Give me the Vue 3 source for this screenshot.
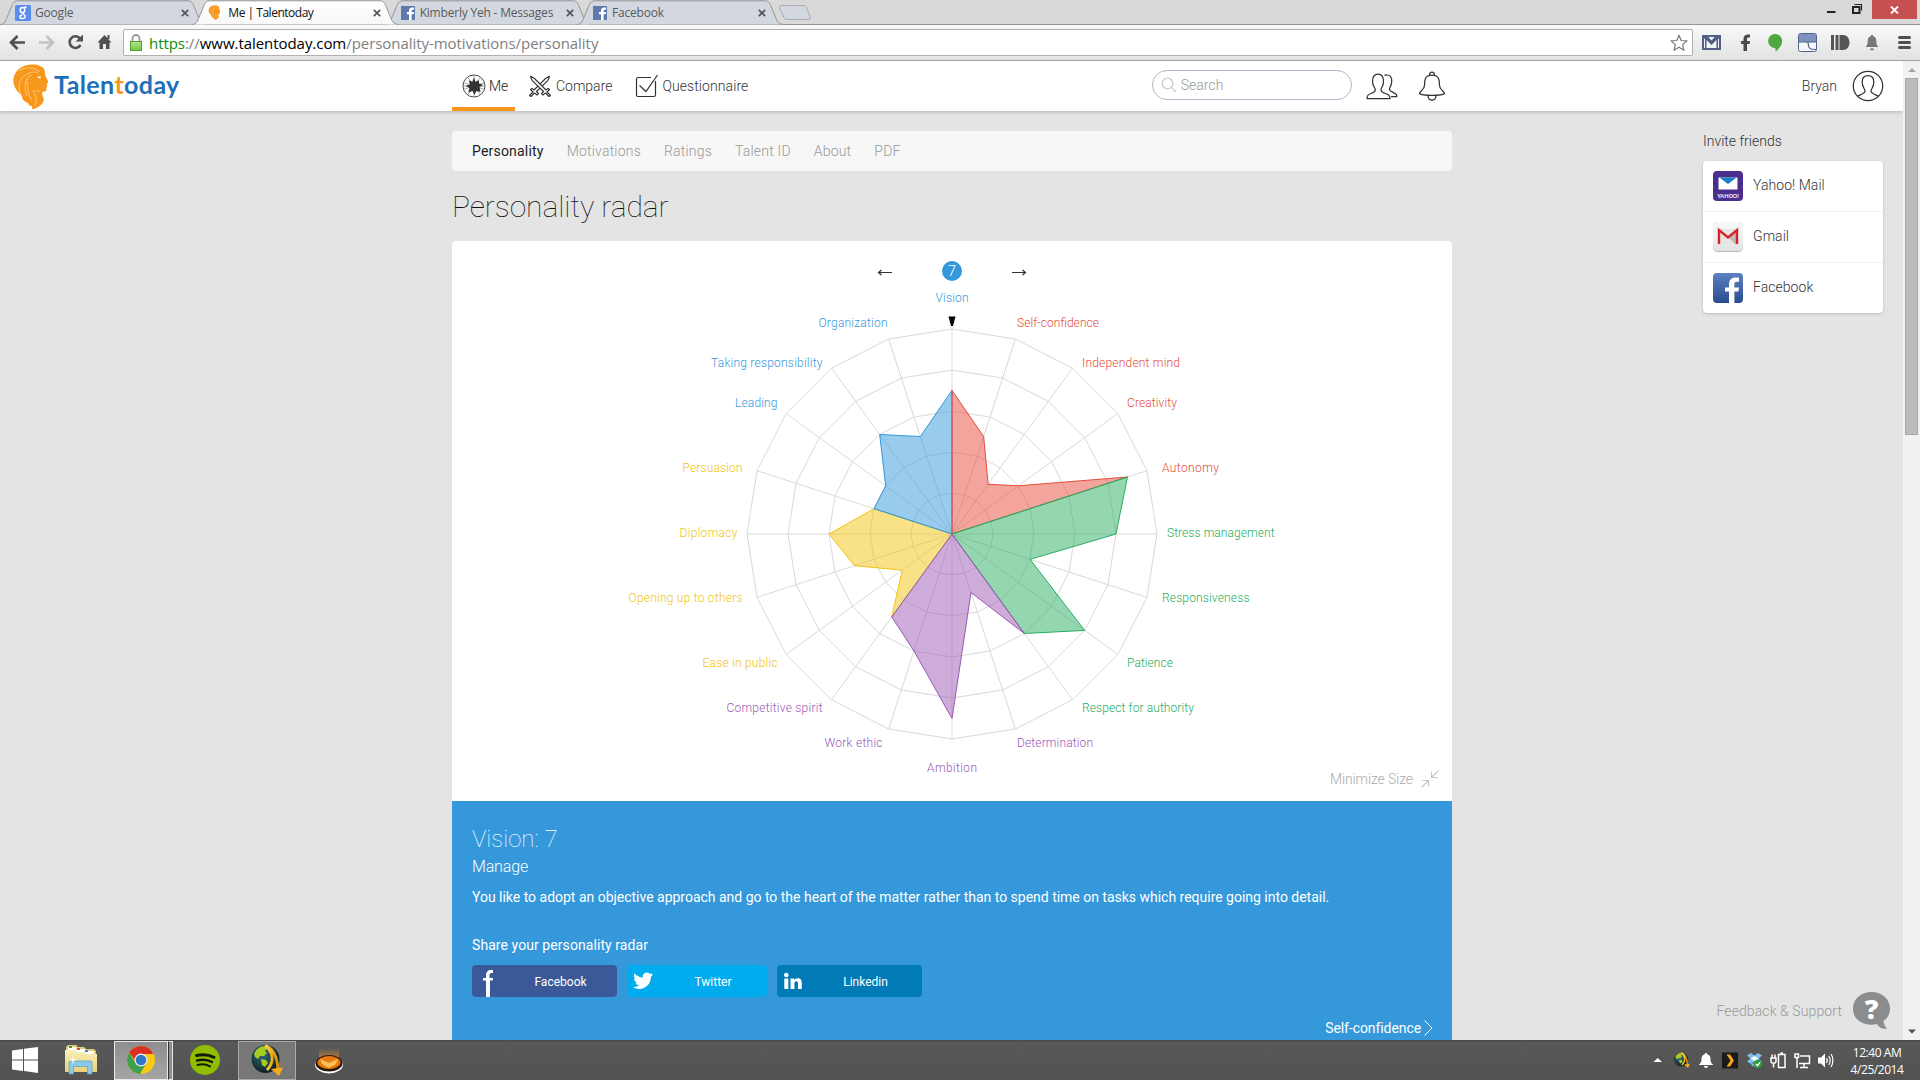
<script setup>
const tabs = [
  { title: 'Google', icon: 'google' },
  { title: 'Me | Talentoday', icon: 'lion', active: true },
  { title: 'Kimberly Yeh - Messages', icon: 'fb' },
  { title: 'Facebook', icon: 'fb' },
]

const sections = ['Personality', 'Motivations', 'Ratings', 'Talent ID', 'About', 'PDF']

const BLUE = '#3498db'
const RED = '#e74c3c'
const GREEN = '#27ae60'
const PURPLE = '#9b59b6'
const YELLOW = '#f1c40f'

// One entry per axis, clockwise from the top; x / y locate the label around the centre, w is its width.
const traits = [
  { name: 'Vision', value: 7, color: BLUE, x: 0, y: -232, w: 33 },
  { name: 'Self-confidence', value: 5, color: RED, x: 65, y: -207, w: 82 },
  { name: 'Independent mind', value: 3, color: RED, x: 130, y: -167, w: 98 },
  { name: 'Creativity', value: 4, color: RED, x: 175, y: -127, w: 50 },
  { name: 'Autonomy', value: 9, color: RED, x: 210, y: -62, w: 57 },
  { name: 'Stress management', value: 8, color: GREEN, x: 215, y: 3, w: 107.5 },
  { name: 'Responsiveness', value: 4, color: GREEN, x: 210, y: 68, w: 87.5 },
  { name: 'Patience', value: 8, color: GREEN, x: 175, y: 133, w: 46 },
  { name: 'Respect for authority', value: 6, color: GREEN, x: 130, y: 178, w: 112 },
  { name: 'Determination', value: 3, color: PURPLE, x: 65, y: 213, w: 76 },
  { name: 'Ambition', value: 9, color: PURPLE, x: 0, y: 238, w: 50 },
  { name: 'Work ethic', value: 6, color: PURPLE, x: -69.5, y: 213, w: 58 },
  { name: 'Competitive spirit', value: 5, color: PURPLE, x: -129.5, y: 178, w: 96 },
  { name: 'Ease in public', value: 3, color: YELLOW, x: -174.5, y: 133, w: 75 },
  { name: 'Opening up to others', value: 5, color: YELLOW, x: -209.5, y: 68, w: 114 },
  { name: 'Diplomacy', value: 6, color: YELLOW, x: -214.5, y: 3, w: 58 },
  { name: 'Persuasion', value: 4, color: YELLOW, x: -209.5, y: -62, w: 60 },
  { name: 'Leading', value: 4, color: BLUE, x: -174.5, y: -127, w: 42.5 },
  { name: 'Taking responsibility', value: 6, color: BLUE, x: -129.5, y: -167, w: 111.5 },
  { name: 'Organization', value: 5, color: BLUE, x: -64.5, y: -207, w: 69 },
]

const RADIUS = 205
const point = (i, value) => {
  const a = (i * Math.PI) / 10
  const r = (value / 10) * RADIUS
  return [+(Math.sin(a) * r).toFixed(2), +(-Math.cos(a) * r).toFixed(2)]
}
const rings = [2, 4, 6, 8, 10].map((v) => traits.map((_, i) => point(i, v).join(',')).join(' '))
const axes = traits.map((_, i) => point(i, 10))
const groups = [
  { from: 12, color: YELLOW },
  { from: 16, color: BLUE },
  { from: 0, color: RED },
  { from: 4, color: GREEN },
  { from: 8, color: PURPLE },
].map((g) => {
  const pts = ['0,0']
  for (let i = g.from; i <= g.from + 4; i++) pts.push(point(i, traits[i % 20].value).join(','))
  return { color: g.color, points: pts.join(' ') }
})
const anchor = (x) => (x === 0 ? 'middle' : x > 0 ? 'start' : 'end')
</script>

<template>
  <div class="screen">
    <svg width="0" height="0" class="defs">
      <defs>
        <linearGradient id="tabOn" x1="0" y1="0" x2="0" y2="1"><stop offset="0" stop-color="#fff" /><stop offset="1" stop-color="#f8f8f8" /></linearGradient>
        <linearGradient id="fbg" x1="0" y1="0" x2="0" y2="1"><stop offset="0" stop-color="#5c80c4" /><stop offset="1" stop-color="#2a4c8c" /></linearGradient>
        <linearGradient id="gmg" x1="0" y1="0" x2="0" y2="1"><stop offset="0" stop-color="#f8f8f8" /><stop offset="1" stop-color="#e2e4e3" /></linearGradient>
        <linearGradient id="lockg" x1="0" y1="0" x2="0" y2="1"><stop offset="0" stop-color="#b4e68a" /><stop offset="1" stop-color="#6fc63f" /></linearGradient>
        <radialGradient id="globe" cx=".4" cy=".35" r=".7"><stop offset="0" stop-color="#2f6b78" /><stop offset="1" stop-color="#0a1c22" /></radialGradient>
        <linearGradient id="gold" x1="0" y1="0" x2="1" y2="0"><stop offset="0" stop-color="#ffd23a" /><stop offset="1" stop-color="#e09000" /></linearGradient>
        <linearGradient id="folder" x1="0" y1="0" x2="0" y2="1"><stop offset="0" stop-color="#fbf0b8" /><stop offset="1" stop-color="#e9cf78" /></linearGradient>
        <linearGradient id="glow" x1="0" y1="0" x2="0" y2="1"><stop offset="0" stop-color="#ff9d2e" stop-opacity="0" /><stop offset="1" stop-color="#ff9d2e" stop-opacity=".75" /></linearGradient>
        <symbol id="lion" viewBox="0 0 36 45">
          <path fill="#f7981c" d="M19 .5C24 0 29 2 31 5c1 2 1 4 1 6l1.500 3c.5 1.500 2 3 1.800 4.500-.3 1-1.300.8-1.500 1.500l.4 2.500-1 1 .3 2.500c-1 2.500-4 .8-4.500 3 0 3 2.500 4.500 1.500 8-1 3.500-6 7.500-12 8.500 1-1.500 1-2.500.4-3.500-2 .4-3.400-1-3.900-3C10 37.500 9 34 8.500 31 5 28.500 1 24 .4 18 0 12 3 6.500 8 3.500 11 1.500 15 .5 19 .5z" />
          <path fill="none" stroke="#ffd79c" stroke-width=".7" d="M8 31C5 24 5 14 14 10c5-2.500 9-3 11.500 0M12 20c1-4 3-8 7-9M14 32C11 25 12 18 15 15M19 36c-4-5-5-12-4-18M27 27c-3 1-4-2-7 0 3 4 4 9 2 15M6 7C10 4 17 3 22 5l5 3" />
          <path fill="#fff" d="M24.500 12.500l3.500.3-.5 1.500-2.500-.4z" />
        </symbol>
        <symbol id="earth" viewBox="0 0 32 32">
          <circle cx="14.500" cy="15" r="14" fill="url(#globe)" />
          <path fill="#a6cc22" d="M3 10C5 5 9 2 14 2l3 2-3 3 2 2-3 3H9l-2 3-3-2zM10 15l5 1 2 3-3 4-3-2zM18 3l4 2-1 4-3-2z" />
          <path fill="none" stroke="url(#gold)" stroke-width="2.800" d="M14 1.500c7 2 12 9 13 24M15 2c5 5 7 10 6 15s-3 7-5 9" />
          <path fill="#f3ab17" d="M20 25l12-1.500-4 8.500z" />
        </symbol>
      </defs>
    </svg>

    <!-- Browser window -->
    <header class="strip">
      <div class="tabs">
        <div v-for="(t, i) in tabs" :key="i" class="tab" :class="{ on: t.active }">
          <svg class="shape" width="208" height="25" viewBox="0 0 208 25">
            <path :fill="t.active ? 'url(#tabOn)' : '#d3d8e0'" stroke="#949597" d="M0 24.500C4 24 5 22.500 6.500 18.500L12 5.500C13.600 1.800 14.500.8 18.500.8H187c4 0 5 1 6.600 4.700l5.500 13C200.600 22.500 202 24 207 24.500" />
          </svg>
          <svg v-if="t.icon === 'google'" class="fav" viewBox="0 0 16 16"><rect width="16" height="16" rx="1.500" fill="#5b8def" /><g fill="none" stroke="#fff" stroke-width="1.500"><ellipse cx="7.500" cy="5" rx="2.300" ry="2.600" /><path d="M9 2.300h2.500M8 7.600c-1 1 0 1.500 1 2 2 1.200 1.500 4-1.500 4s-3.500-3-.5-3.600" /></g></svg>
          <svg v-else-if="t.icon === 'lion'" class="fav"><use href="#lion" x="1" width="13" height="15" y="0" /></svg>
          <svg v-else class="fav" viewBox="0 0 16 16"><path fill="#5f78ae" d="M1 1h14v14H1z" /><path fill="#fff" d="M9 15V9.300H7V7h2V5.500C9 3.500 10.300 2.500 12 2.500h2v2.200h-1.200c-.9 0-1.200.4-1.200 1.200V7H14l-.3 2.300h-2.100V15z" /></svg>
          <span class="tname">{{ t.title }}</span>
          <svg class="x" width="8" height="8" viewBox="0 0 8 8"><path stroke="#555" stroke-width="1.700" d="M.8.8l6.400 6.400M7.200.8L.8 7.200" /></svg>
        </div>
      </div>
      <svg class="newtab" width="34" height="18" viewBox="0 0 34 18"><path fill="#d3d8e0" stroke="#a9abae" d="M4 1.500h21c2 0 3 .5 3.800 2.500l3 8.500c.8 2.500 0 3-1.800 3H9.500c-2 0-3-.5-3.800-2.500l-4-9C1 2 2 1.500 4 1.500z" /></svg>
      <div class="winbtns">
        <svg width="44" height="20" viewBox="0 0 44 20"><path fill="#222" d="M4 11h8.500v2H4z" /><path fill="none" stroke="#222" stroke-width="1.100" d="M31.500 4.500h7v6" /><path fill="none" stroke="#222" stroke-width="2" d="M30 7h6.500v6H30z" /></svg>
        <div class="close"><svg width="9" height="8" viewBox="0 0 9 8"><path stroke="#fff" stroke-width="1.800" d="M1 .5l7 7M8 .5l-7 7" /></svg></div>
      </div>
    </header>

    <div class="toolbar">
      <svg class="navicons" width="114" height="36" viewBox="0 0 114 36">
        <g fill="none" stroke-width="2.600">
          <path stroke="#505050" d="M25 18.500H12M17.500 12L11 18.500l6.500 6.500" />
          <path stroke="#c2c2c2" d="M39 18.500h13M46.500 12l6.500 6.500-6.500 6.500" />
          <path stroke="#505050" d="M80 14.500a5.800 5.800 0 1 0 .5 6.500" />
        </g>
        <path fill="#505050" d="M83 10.500v7h-7.500zM97.500 18.500l7-7.500 7 7.500h-2V25h-3.500v-5h-3v5h-3.500v-6.500zM107.500 11h2v4h-2z" />
      </svg>
      <div class="urlbar">
        <svg width="14" height="18" viewBox="0 0 14 18"><path fill="none" stroke="#999" stroke-width="1.800" d="M3.500 8V4.500a3.500 3.500 0 0 1 7 0V8" /><rect x="1.500" y="7.500" width="11" height="9" fill="url(#lockg)" stroke="#4e9d35" /></svg>
        <span class="url"><b>https</b>://<i>www.talentoday.com</i>/personality-motivations/personality</span>
        <svg class="star" width="18" height="18" viewBox="0 0 18 18"><path fill="#fff" stroke="#777" stroke-width="1.200" stroke-linejoin="round" d="M9 1.200l2.200 5.300 5.800.4-4.400 3.700 1.400 5.700L9 13.200l-5 3.100 1.400-5.700L1 6.900l5.800-.4z" /></svg>
      </div>
      <svg width="220" height="36" viewBox="0 0 220 36">
        <path fill="#f1f3f7" stroke="#51607f" stroke-width="2" d="M3 12h17v13H3z" /><path fill="#51607f" d="M3 11h3.500l5 5.500 5-5.500H20v3l-2 1v10h-1.500V16l-5 5-5-5v9H5V15l-2-1z" />
        <path fill="#4a4a4a" d="M43.500 27v-7H41v-3h2.500v-2c0-3 1.600-4.500 4.500-4.500h2v3h-1.500c-1.100 0-1.500.6-1.500 1.500v2h3l-.4 3H47v7z" />
        <path fill="#4fa83d" d="M75 10a7 7 0 0 1 7.200 7c0 4.500-3.500 7.500-6.500 10.800l-.5-3.800a7 7 0 0 1-.2-14z" />
        <rect x="98.500" y="9.500" width="18" height="18" rx="2" fill="#f5f6fa" stroke="#53648c" /><path fill="#7f92bd" d="M99 10h17v8H99z" /><path fill="none" stroke="#53648c" stroke-width="1.200" d="M99 18h7c2 0 2.500 1 2.500 3 0 3 1 4.500 7.500 4.500M108 18h8" />
        <path fill="#555" d="M131 11h3v15h-3zM135.500 11h3v15h-3zM139.500 11h3.500c4 0 6.500 3.500 6.500 7.500S147 26 143 26h-3.500z" />
        <path fill="#777" d="M172 11c1 0 1.400.6 1.400 1.300 2 .8 2.900 2.400 2.900 4.500 0 4 1 5 2.300 6.200h-13.200c1.300-1.200 2.300-2.200 2.300-6.200 0-2.100.9-3.700 2.900-4.500 0-.7.400-1.300 1.400-1.300zM170 24.500h4c0 1.300-.8 2-2 2s-2-.7-2-2z" />
        <path stroke="#505050" stroke-width="3" stroke-linecap="round" d="M199.500 13.500h10M199.500 18.500h10M199.500 23.500h10" />
      </svg>
    </div>

    <div class="viewport">
      <div class="page">
        <!-- Site header -->
        <div class="top">
          <div class="brand">
            <svg width="36" height="45"><use href="#lion" width="36" height="45" /></svg>
            <span class="logo">Talen<em>t</em>oday</span>
          </div>
          <nav class="main">
            <a class="me">
              <svg width="24" height="24" viewBox="0 0 24 24"><circle cx="12" cy="12" r="11" fill="none" stroke="#333" stroke-width=".9" /><path stroke="#888" stroke-width=".7" d="M12 1v22M1 12h22M5.500 3l13 18M18.500 3l-13 18M1.500 8.600l21 6.800M1.500 15.400l21-6.800" /><path fill="#333" d="M12 3.500l1.500 4.200 3.500-1.500v3.300l4.200 1.500-3.700 2 1 5-4-1-2.200 4-1.600-4-4.500 1.500 1.300-4.500-4-2.200 4.500-1.300-1.300-4 3.600 1.200z" /></svg>
              Me
            </a>
            <a>
              <svg width="24" height="22" viewBox="0 0 24 22"><g fill="#fff" stroke="#333" stroke-width="1.100" stroke-linejoin="round"><path d="M1.500 20.500l3.500-3.500-2.500-2.500 1.500-1.200 2 1.700L17.500 3.500l4-2.200-1.500 4L8.500 16.500l2 2-1.500 1.500-2.500-2-3.500 3.500z" /><path d="M22.500 20.500L19 17l2.500-2.500-1.500-1.200-2 1.700L6.500 3.500l-4-2.200 1.500 4L15.500 16.500l-2 2 1.500 1.500 2.500-2 3.500 3.500z" /></g></svg>
              Compare
            </a>
            <a class="quest">
              <svg width="24" height="24" viewBox="0 0 24 24"><path fill="none" stroke="#333" stroke-width="1.200" d="M16 3.500H3A1.500 1.500 0 0 0 1.500 5v16A1.500 1.500 0 0 0 3 22.500h16a1.500 1.500 0 0 0 1.500-1.500V7M4.500 11.500l6.500 6L22.500 1" /></svg>
              Questionnaire
            </a>
          </nav>
          <div class="search">
            <svg width="16" height="16" viewBox="0 0 16 16"><g fill="none" stroke="#ccc" stroke-width="1.300"><circle cx="6.500" cy="6.500" r="5.300" /><path d="M10.400 10.400L15 15" /></g></svg>
            Search
          </div>
          <svg class="people" width="32" height="28" viewBox="0 0 32 28"><g fill="none" stroke="#333" stroke-width="1.250" stroke-linejoin="round"><path d="M1 26.500h23c0-3.500-2-4.300-4.500-5-2.500-.8-4.500-1.500-4.500-4 0-1.800 2.500-3 2.500-8 0-4.500-1.500-7.500-5.500-7.500S6.500 5 6.500 9.500c0 5 2.800 6.200 2.800 8 0 2.500-1.800 3.200-4.300 4C2.500 22.300 1 23 1 26.500z" /><path d="M18.500 3.500c1-.8 2-.7 3-.5 3.500.5 4.500 3.500 4.200 7-.3 4-2.200 5.500-2.200 7 0 2 1.500 2.500 3.500 3.300 2.500 1 3.800 1.500 3.800 4.200H25" /></g></svg>
          <svg class="bell" width="28" height="32" viewBox="0 0 28 32"><g fill="none" stroke="#333" stroke-width="1.250"><path d="M1.500 23.500c0-2.500 5-3.500 5-8 0-5.500.3-10.500 7.500-10.500s7.500 5 7.500 10.500c0 4.500 5 5.500 5 8C24 26 4 26 1.500 23.500zM11.500 5c0-4 5-4 5 0M10 26c.5 5.500 7.500 5.500 8 0" /></g></svg>
          <span class="user">Bryan</span>
          <svg width="32" height="32" viewBox="0 0 32 32"><g fill="none" stroke="#333" stroke-width="1.250"><circle cx="16" cy="16" r="14.700" /><path d="M5.500 26.300c3-1.800 7.500-2.600 7.500-5.300 0-2.500-2.800-3-2.800-9C10.200 7.500 12 5.500 16 5.500s5.800 2 5.800 6.500c0 6-2.800 6.500-2.800 9 0 2.700 4.500 3.500 7.500 5.300" /></g></svg>
        </div>

        <div class="body">
          <main>
            <nav class="sub">
              <a v-for="(s, i) in sections" :key="s" :class="{ cur: i === 0 }">{{ s }}</a>
            </nav>
            <h1>Personality radar</h1>
            <section class="card">
              <svg class="radar" width="1000" height="560" viewBox="-500 -293 1000 560">
                <g fill="none" stroke="#333" stroke-width="1.200">
                  <path d="M-60-261.500H-73.500M-70.500-264l-3 2.500 3 2.500" />
                  <path d="M60-261.500H73.500M70.500-264l3 2.500-3 2.500" />
                </g>
                <circle cx="0" cy="-263" r="10" :fill="BLUE" />
                <text class="score" x="0" y="-258" text-anchor="middle">7</text>
                <g fill="none" stroke="#d9d9d9">
                  <polygon v-for="(r, i) in rings" :key="i" :points="r" />
                  <line v-for="(a, i) in axes" :key="'a' + i" x1="0" y1="0" :x2="a[0]" :y2="a[1]" />
                </g>
                <polygon v-for="g in groups" :key="g.color" :points="g.points" :fill="g.color" fill-opacity=".5" :stroke="g.color" />
                <path d="M-3.500-217.500h7L1-208h-2z" />
                <text v-for="t in traits" :key="t.name" class="label" :x="t.x" :y="t.y" :fill="t.color" :text-anchor="anchor(t.x)" :textLength="t.w">{{ t.name }}</text>
              </svg>
              <div class="minimize">
                Minimize Size
                <svg width="18" height="18" viewBox="0 0 18 18"><path fill="none" stroke="#c4c4c4" stroke-width="1.100" d="M.5 17.500l7-7M1.500 10.500h6v6M17.500.5l-7 7M10.500 1.500v6h6" /></svg>
              </div>
            </section>
            <section class="detail">
              <h2>Vision: 7</h2>
              <h3>Manage</h3>
              <p class="desc">You like to adopt an objective approach and go to the heart of the matter rather than to spend time on tasks which require going into detail.</p>
              <p class="share">Share your personality radar</p>
              <div class="btns">
                <a class="b fb"><svg width="32" height="32" viewBox="0 0 32 32"><path fill="#fff" d="M14 32V15.500h-3V13h3v-2.500C14 7 16 5 19 5h2v3h-1.500c-1.700 0-2 1-2 2.500V13H21l-.3 2.500h-2.700V32z" /></svg><span>Facebook</span></a>
                <a class="b tw"><svg width="32" height="32" viewBox="0 0 32 32"><path fill="#fff" d="M26 9.500c-.7.300-1.500.5-2.300.6.8-.5 1.500-1.300 1.800-2.200-.8.500-1.700.8-2.600 1a4.100 4.100 0 0 0-7 3.700c-3.400-.2-6.400-1.800-8.400-4.300-1.100 1.900-.6 4.300 1.200 5.500-.7 0-1.300-.2-1.800-.5 0 2 1.400 3.700 3.300 4.100-.6.200-1.200.2-1.800.1.500 1.600 2 2.800 3.800 2.800A8.200 8.200 0 0 1 6 22c1.800 1.200 4 1.900 6.300 1.900 7.500 0 11.900-6.400 11.600-12.200.8-.6 1.500-1.300 2.100-2.200z" /></svg><span>Twitter</span></a>
                <a class="b li"><svg width="32" height="32" viewBox="0 0 32 32"><g fill="#fff"><circle cx="9.300" cy="10" r="2.300" /><path d="M7.300 13.500h4V24h-4zM13.500 13.500h3.700V15c.7-1.100 1.900-1.800 3.500-1.800 3.200 0 4.100 2 4.100 5V24H21v-5.200c0-1.400-.2-2.600-1.700-2.600s-1.900 1.200-1.900 2.600V24h-3.900z" /></g></svg><span>Linkedin</span></a>
              </div>
              <div class="next">Self-confidence<svg width="9" height="16" viewBox="0 0 9 16"><path fill="none" stroke="#fff" d="M.5.500L8 8 .5 15.500" /></svg></div>
            </section>
          </main>

          <aside>
            <h4>Invite friends</h4>
            <ul>
              <li><svg width="30" height="30" viewBox="0 0 30 30"><rect width="30" height="30" rx="4" fill="#4b2e8d" /><path fill="#fff" d="M5.500 6.500h19v12h-19z" /><path fill="#1b7fc8" d="M6.500 6.500h17L15 13z" /><text x="15" y="26.500" text-anchor="middle" class="yh">YAHOO!</text></svg><span>Yahoo! Mail</span></li>
              <li><svg width="30" height="30" viewBox="0 0 30 30"><rect width="30" height="30" rx="4.500" fill="#bbb" /><rect width="30" height="29" rx="4.500" fill="url(#gmg)" /><path fill="#e6e6e6" d="M6 7h18v15H6z" /><path fill="#bdbdbd" d="M15 15l9-6v13h-2z" /><path fill="none" stroke="#d8232a" stroke-width="2.400" d="M6 22V8l9 7.500L24 8v14" /></svg><span>Gmail</span></li>
              <li><svg width="30" height="30" viewBox="0 0 30 30"><rect width="30" height="30" rx="4" fill="url(#fbg)" /><path fill="#fff" d="M16 30V18.500h-4V14.500h4v-3C16 7 18.500 4.500 22.500 4.500H26v4.200h-2c-2 0-2.600.8-2.600 2.500v3.300H26l-.6 4h-4V30z" /></svg><span>Facebook</span></li>
            </ul>
          </aside>
        </div>

        <div class="support">
          <span>Feedback &amp; Support</span>
          <svg width="38" height="44" viewBox="0 -6 38 44"><path fill="#8b8c8e" d="M18.500 0C29 0 37 7 37 16.500c0 5.500-2.500 9.500-6.500 12.500.3 3 1.500 5.500 3.500 7.500-4.500 1-8-1-10-4.500C10 35 0 27.500 0 16.500 0 7 8 0 18.500 0z" /><text x="18.500" y="27" text-anchor="middle" class="q">?</text></svg>
        </div>
      </div>
      <div class="scroll">
        <svg width="17" height="17" viewBox="0 0 17 17"><path fill="#a3a3a3" d="M5 11l4-4 4 4z" /></svg>
        <div class="thumb"></div>
        <svg class="dn" width="17" height="17" viewBox="0 0 17 17"><path fill="#505050" d="M5 6.500h8l-4 4z" /></svg>
      </div>
    </div>

    <!-- Desktop taskbar -->
    <footer class="task">
      <svg class="win" width="26" height="26" viewBox="0 0 26 26"><path fill="#fff" d="M0 3.500L11 2v10.500H0zM12 1.800L26 0v12.500H12zM0 13.500h11V24L0 22.500zM12 13.500h14V26l-14-1.900z" /></svg>
      <svg class="exp" width="34" height="32" viewBox="0 0 34 32"><path fill="#e3c96f" d="M2 3l2-2h8l2 2h6l2 2h8l2 2v20H2z" /><path fill="#fff" d="M4 3h8v3H4zM12 5h9v3h-9zM20 7h10v3H20z" /><path fill="#27a844" d="M5 2h3v2H5z" /><path fill="#d64b2a" d="M13 4h3v2h-3z" /><path fill="#2f8be0" d="M21 6h3v2h-3z" /><path fill="url(#folder)" d="M1 6h10l2 2h8l2 2h10v18H1z" /><path fill="#8ccbe8" stroke="#5a9fc6" stroke-width=".7" d="M5 30V18.500c0-1 .5-1.500 1.500-1.500h20c1 0 1.500.5 1.500 1.500V30h-4.500v-7.500h-14V30z" /><path fill="#fff" d="M9 11l.8 4 4 .8-4 .8L9 21l-.8-4.400-4-.8 4-.8z" /></svg>
      <div class="app chrome">
        <svg width="30" height="30" viewBox="0 0 30 30"><circle cx="15" cy="15" r="14" fill="#f6c915" /><path fill="#3da04b" d="M3.200 7.500A14 14 0 0 0 14 29l6-10.500L15 21 9.500 18z" /><path fill="#d93025" d="M15 1a14 14 0 0 1 12.400 8H15.500L9.500 16 3.200 7.500A14 14 0 0 1 15 1z" /><circle cx="15" cy="15" r="6.500" fill="#eee" /><circle cx="15" cy="15" r="5.300" fill="#2f76c4" /></svg>
      </div>
      <div class="stack"></div>
      <svg class="spot" width="30" height="30" viewBox="0 0 30 30"><circle cx="15" cy="15" r="15" fill="#90bd00" /><g fill="none" stroke="#151a08" stroke-linecap="round"><path stroke-width="3" d="M6.500 10.500c6-1.500 12-1 17.500 1.800" /><path stroke-width="2.500" d="M7 15.500c5.500-1.500 10.500-1 15 1.500" /><path stroke-width="2" d="M7.500 20c4.500-1.200 9-.7 12.500 1.300" /></g></svg>
      <div class="app jd"><svg width="32" height="32"><use href="#earth" width="32" height="32" /></svg></div>
      <svg class="disc" width="30" height="27" viewBox="0 0 30 27"><path fill="url(#glow)" d="M5 1h20v14H5z" /><ellipse cx="15" cy="17.500" rx="14" ry="9" fill="#fff" /><ellipse cx="15" cy="16.300" rx="13.500" ry="8.300" fill="#2a1608" /><ellipse cx="15" cy="15.500" rx="11.500" ry="6.500" fill="#e87a10" /><path fill="#ffc05a" d="M6 12l9 4 9-4-2 5-7 4-7-4z" /></svg>

      <div class="tray">
        <svg width="190" height="20" viewBox="0 0 190 20">
          <path fill="#fff" d="M3.500 12l4.200-4 4.300 4z" />
          <use href="#earth" x="24" y="2" width="16" height="16" />
          <path fill="#fff" d="M56 3c.8 0 1.200.5 1.200 1.200 2.500.7 3.300 2.600 3.300 4.800 0 3.500 1 4.200 2.500 5.500v.5H49v-.5c1.500-1.300 2.500-2 2.500-5.500 0-2.200.8-4.100 3.300-4.800C54.800 3.500 55.200 3 56 3zM54 16h4c0 1.300-.8 1.800-2 1.800s-2-.5-2-1.800z" />
          <path fill="#1c1a18" d="M72 2.500h16v16H72z" /><path fill="#f4a81d" d="M76.500 4.500h3.500l4 6-4 6h-3.500l4-6z" />
          <path fill="#7cc0ee" d="M97 5.500L101 3l3.500 2.500L108 3l4 2.500-3.500 3 3.500 3-4 2.500-3.500-2.500-3.500 2.500-4-2.500 3.500-3zM101 14.500l3.500-2 3.500 2-3.500 2.500z" /><path fill="#fff" d="M100.500 8.500l4-2.500 4 2.500-4 2.500z" /><circle cx="108" cy="14" r="4.300" fill="#2b9c3d" /><path fill="none" stroke="#fff" stroke-width="1.300" d="M106 14l1.500 1.700 2.500-3.400" />
          <g fill="none" stroke="#fff" stroke-width="1.500"><path d="M128.500 4.500h6.500v13h-6.500zM130.500 3h2.500M121 8v3c0 3 5 3 5 0V8zM122 8V4.500M125 8V4.500M123.500 13v4.500" /><path d="M150 6h9.500v7.500H149M154 13.500V17.500M150 17.500h8M145 4h3.500v3.500H145zM147 8v10" /></g>
          <path fill="#fff" d="M168 7.500h3l4-4v14l-4-4h-3z" /><path fill="none" stroke="#fff" stroke-width="1.200" d="M176.500 8c1 1.500 1 3.500 0 5M178.800 6c1.800 2.500 1.800 6.500 0 9M181 4c2.500 3.500 2.500 9.500 0 13" />
        </svg>
        <div class="clock"><span>12:40 AM</span><span>4/25/2014</span></div>
      </div>
    </footer>
  </div>
</template>

<style>
body {
  margin: 0;
  overflow: hidden;
}
</style>

<style scoped>
* {
  box-sizing: border-box;
}
.screen {
  display: flex;
  flex-direction: column;
  width: 1920px;
  height: 1080px;
  overflow: hidden;
  background: #e4e4e4;
  font-family: Roboto, 'Liberation Sans', sans-serif;
  font-weight: 300;
  font-size: 14px;
  color: #333;
}
svg {
  flex: none;
  display: block;
}
.defs {
  position: absolute;
}
h1, h2, h3, h4, p, ul {
  margin: 0;
  padding: 0;
  font-weight: 300;
}

/* tab strip */
.strip {
  display: flex;
  height: 25px;
  background: #d9d9d9;
  border-bottom: 1px solid #949597;
  font: 400 12px 'Open Sans', 'Noto Sans', sans-serif;
}
.tabs {
  display: flex;
}
.tab {
  position: relative;
  display: flex;
  align-items: center;
  width: 208px;
  height: 25px;
  margin-right: -15.700px;
  padding: 0 19px 0 15px;
  color: #5a5a5a;
}
.tab.on {
  z-index: 2;
  color: #111;
}
.shape {
  position: absolute;
  left: 0;
  top: 0;
}
.fav {
  position: relative;
  width: 16px;
  height: 16px;
}
.tname {
  position: relative;
  flex: 1;
  margin-left: 4px;
  white-space: nowrap;
  letter-spacing: -.2px;
}
.on .tname {
  margin-left: 5px;
  letter-spacing: -.48px;
}
.x {
  position: relative;
}
.newtab {
  margin: 4px 0 0 9px;
}
.winbtns {
  display: flex;
  margin-left: auto;
  padding-right: 3px;
}
.winbtns > svg {
  margin-right: 5px;
}
.close {
  display: flex;
  align-items: center;
  justify-content: center;
  width: 45px;
  height: 19px;
  background: #c75050;
}

/* toolbar */
.toolbar {
  display: flex;
  height: 36px;
  background: linear-gradient(#f9f9f9, #e2e2e2);
  border-bottom: 1px solid #a0a0a0;
}
.navicons {
  margin-right: 9px;
}
.toolbar > svg {
  margin-top: -1px;
}
.urlbar {
  display: flex;
  align-items: center;
  width: 1570px;
  height: 27px;
  margin: 4px 7px 0 0;
  padding: 0 4px 0 5px;
  background: #fff;
  border: 1px solid #b0b0b0;
  border-radius: 2px;
}
.url {
  margin-left: 6px;
  font: 400 15px 'Open Sans', 'Noto Sans', sans-serif;
  letter-spacing: -.05px;
  color: #808080;
}
.url b {
  font-weight: 400;
  color: #0a8f08;
}
.url i {
  font-style: normal;
  color: #000;
}
.star {
  margin-left: auto;
}

/* page */
.viewport {
  display: flex;
  height: 979px;
}
.page {
  position: relative;
  display: flex;
  flex-direction: column;
  width: 1903px;
  overflow: hidden;
}
.top {
  display: flex;
  align-items: center;
  flex: none;
  height: 50px;
  padding-right: 19px;
  background: #fff;
  box-shadow: 0 1px 4px rgba(0, 0, 0, .22);
}
.brand {
  display: flex;
  width: 452px;
  padding-left: 13px;
  align-items: center;
}
.logo {
  margin: -4px 0 0 5px;
  font: 700 25px Lato, sans-serif;
  letter-spacing: .4px;
  color: #1f6fb8;
}
.logo em {
  font-style: normal;
  color: #f7981c;
}
.main {
  display: flex;
  align-self: stretch;
  gap: 13px;
}
.main a {
  display: flex;
  align-items: center;
  gap: 4px;
}
.main .me {
  width: 63px;
  gap: 3px;
  padding: 4px 0 0 10px;
  border-bottom: 4px solid #f7981c;
  color: #222;
}
.main .quest {
  margin-left: 10px;
  gap: 3px;
  letter-spacing: .08px;
}
.search {
  display: flex;
  align-items: center;
  gap: 4px;
  width: 200px;
  height: 30px;
  margin: -2px 14px 0 auto;
  padding-left: 8px;
  border: 1px solid #b4b6c8;
  border-radius: 15px;
  color: #999;
}
.people {
  margin-right: 20px;
}
.bell {
  margin-right: 356px;
}
.user {
  margin-right: 15px;
}

.body {
  display: flex;
  padding: 20px 20px 0 452px;
}
main {
  width: 1000px;
}
.sub {
  display: flex;
  align-items: center;
  gap: 23px;
  height: 40px;
  padding-left: 20px;
  background: #f7f7f7;
  border-radius: 4px;
  letter-spacing: .2px;
  color: #999;
}
.sub .cur {
  font-weight: 400;
  color: #222;
}
h1 {
  height: 70px;
  padding-top: 1px;
  font-size: 30px;
  line-height: 70px;
  font-weight: 100;
  letter-spacing: -.06px;
  color: #111;
}
.card {
  position: relative;
  height: 560px;
  background: #fff;
  border-radius: 4px 4px 0 0;
}
.label {
  font-size: 12px;
}
.score {
  font-size: 15px;
  fill: #fff;
}
.minimize {
  position: absolute;
  right: 13px;
  bottom: 13px;
  display: flex;
  align-items: center;
  gap: 8px;
  letter-spacing: -.1px;
  color: #aaa;
}
.detail {
  display: flex;
  flex-direction: column;
  height: 240px;
  padding: 21px 20px 0;
  background: #3498db;
  color: #fff;
}
h2 {
  font-size: 24px;
  line-height: 34px;
  font-weight: 100;
}
h3 {
  font-size: 16px;
  line-height: 22px;
  letter-spacing: -.15px;
}
.desc {
  margin-top: 9px;
  line-height: 20px;
  font-weight: 400;
  letter-spacing: -.013px;
  white-space: nowrap;
}
.share {
  margin-top: 28px;
  line-height: 20px;
  font-weight: 400;
  letter-spacing: .07px;
}
.btns {
  display: flex;
  gap: 10px;
  margin-top: 10px;
}
.b {
  display: flex;
  align-items: center;
  width: 145px;
  height: 32px;
  border-radius: 4px;
  font-size: 12px;
  font-weight: 400;
}
.b span {
  flex: 1;
  padding: 2px 1px 0 1px;
  text-align: center;
}
.fb {
  background: #3b5998;
}
.tw {
  width: 140px;
  background: #00aced;
}
.li {
  background: #007bb6;
}
.next {
  display: flex;
  justify-content: flex-end;
  align-items: center;
  gap: 3px;
  margin: 23px -1px 0 0;
  font-weight: 400;
  letter-spacing: -.08px;
}

aside {
  width: 180px;
  margin-left: auto;
}
h4 {
  height: 30px;
  line-height: 20px;
  font-size: 14px;
}
aside ul {
  list-style: none;
  background: #fff;
  border-radius: 4px;
  box-shadow: 0 1px 3px rgba(0, 0, 0, .18);
}
aside li {
  display: flex;
  align-items: center;
  gap: 10px;
  height: 51px;
  padding-left: 10px;
  border-bottom: 1px solid #f0f0f0;
}
aside li span {
  padding-bottom: 2px;
  letter-spacing: .05px;
}
aside li:last-child {
  height: 50px;
  border: 0;
}
.yh {
  font: 700 5.500px Lato, sans-serif;
  fill: #fff;
}
.support {
  position: absolute;
  right: 12px;
  bottom: 10px;
  display: flex;
  align-items: flex-end;
  gap: 11px;
  font-size: 14px;
  letter-spacing: .1px;
  color: #999;
}
.support span {
  padding-bottom: 11px;
}
.q {
  font: 800 27px 'Open Sans', sans-serif;
  fill: #fff;
}

.scroll {
  display: flex;
  flex-direction: column;
  width: 17px;
  background: #f1f1f1;
}
.thumb {
  width: 13px;
  height: 357px;
  margin-left: 2px;
  background: #bcbcbc;
  border: 1px solid #a8a8a8;
}
.dn {
  margin-top: auto;
}

/* taskbar */
.task {
  display: flex;
  align-items: center;
  height: 40px;
  background: linear-gradient(#474747, #585858 3px, #525252);
}
.win {
  margin-left: 12px;
}
.exp {
  margin: 0 16px 0 26px;
}
.app {
  display: flex;
  align-items: center;
  justify-content: center;
  height: 39px;
  border: 1px solid #e8e8e8;
}
.chrome {
  width: 54px;
  background: linear-gradient(#8e8e8e, #a5a5a5);
}
.stack {
  width: 5px;
  height: 39px;
  background: #8d8d8d;
  border: 1px solid #e8e8e8;
  border-left: 1px solid #333;
}
.spot {
  margin: 0 18px 0 17px;
}
.jd {
  width: 58px;
  background: #777;
  border-color: #aaa;
}
.disc {
  margin-left: 18px;
}
.tray {
  display: flex;
  align-items: center;
  margin-left: auto;
  padding-right: 16px;
}
.clock {
  display: flex;
  flex-direction: column;
  align-items: center;
  width: 54px;
  margin-left: 10px;
  padding-top: 2px;
  font: 400 12px/17px 'Open Sans', sans-serif;
  letter-spacing: -.45px;
  white-space: nowrap;
  color: #fff;
}
</style>
